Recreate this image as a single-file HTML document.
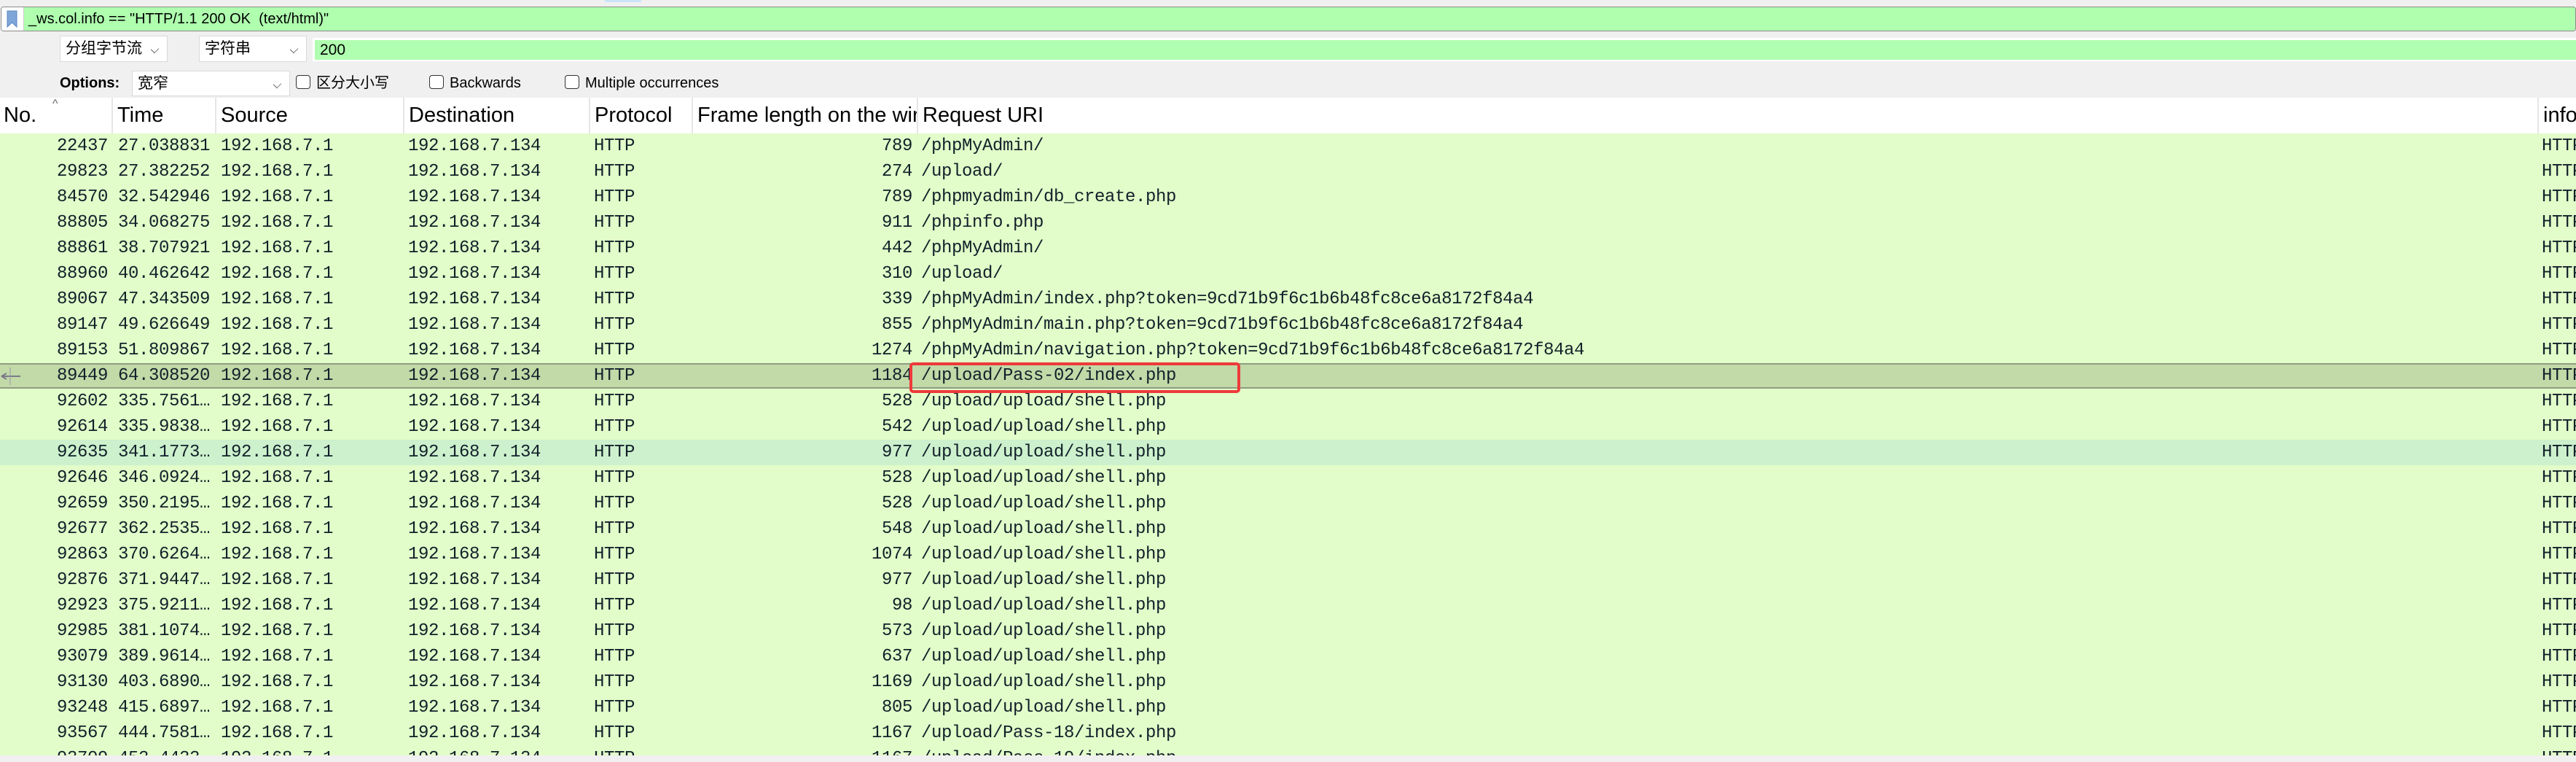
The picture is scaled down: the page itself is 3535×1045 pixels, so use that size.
<!DOCTYPE html>
<html><head><meta charset="utf-8"><style>
*{margin:0;padding:0;box-sizing:border-box}
body{width:3535px;height:1045px;overflow:hidden;background:#f0f0f0;position:relative;font-family:"Liberation Sans","Noto Sans CJK SC",sans-serif;color:#000}
.a{position:absolute}
.combo{position:absolute;background:#fff;border:1px solid #d9d9d9;font-size:21px;line-height:34px;padding-left:7px}
.chev{position:absolute;right:12px;top:13px;width:9px;height:9px;border-right:1.5px solid #666;border-bottom:1.5px solid #666;transform:rotate(45deg) scaleX(0.8)}
.cb{position:absolute;width:20px;height:19px;border:1.5px solid #333;border-radius:4px;background:#fff}
.lbl{position:absolute;font-size:20px;line-height:24px}
.hdr{position:absolute;top:134px;height:49px;background:#fff;left:0;width:3535px}
.hc{position:absolute;top:0;height:49px;font-size:29px;line-height:49px;border-left:2px solid #e6e6e6;padding-left:6px;white-space:nowrap;overflow:hidden}
.rows{position:absolute;top:183px;left:0;width:3535px;height:853px;overflow:hidden}
.r{position:absolute;left:0;width:3535px;height:35px;background:#e2fdc9;font-family:"Liberation Mono",monospace;font-size:24px;letter-spacing:-0.4px;line-height:35px;color:#12202a;white-space:nowrap}
.r span{position:absolute;top:0}
.no{right:3387px;text-align:right}
.fl{right:2283px;text-align:right}
</style></head><body>
<div class="a" style="left:830px;top:0;width:50px;height:3px;background:#cce4f7"></div>
<div class="a" style="left:1px;top:9px;width:3534px;height:34px;border:1px solid #8c8c8c;border-radius:4px;background:#afffaf;overflow:hidden">
 <div class="a" style="left:0;top:0;width:31px;height:32px;background:#fff;border-right:1px solid #ccc"></div>
 <svg class="a" style="left:7px;top:4px" width="15" height="24" viewBox="0 0 15 24"><path d="M1 1H14V23L7.5 17L1 23Z" fill="#7ea7d8" stroke="#5b86c0" stroke-width="1"/></svg>
 <div class="a" style="left:37px;top:0;font-size:20px;line-height:32px">_ws.col.info == "HTTP/1.1 200 OK&nbsp; (text/html)"</div>
</div>
<div class="combo" style="left:82px;top:49px;width:148px;height:36px">分组字节流<span class="chev"></span></div>
<div class="combo" style="left:273px;top:49px;width:148px;height:36px">字符串<span class="chev"></span></div>
<div class="a" style="left:429px;top:52px;width:3106px;height:32px;background:#fff"></div>
<div class="a" style="left:432px;top:55px;width:3103px;height:27px;background:#b0ffb0;font-size:21px;line-height:27px;padding-left:7px">200</div>
<div class="lbl" style="left:82px;top:102px;font-weight:bold;font-size:20px">Options:</div>
<div class="combo" style="left:181px;top:97px;width:217px;height:35px">宽窄<span class="chev"></span></div>
<div class="cb" style="left:406px;top:103px"></div><div class="lbl" style="left:434px;top:102px;font-size:20px">区分大小写</div>
<div class="cb" style="left:589px;top:103px"></div><div class="lbl" style="left:617px;top:102px">Backwards</div>
<div class="cb" style="left:775px;top:103px"></div><div class="lbl" style="left:803px;top:102px">Multiple occurrences</div>
<div class="hdr">
 <div class="hc" style="left:-2px;width:155px;padding-left:5px">No.<span class="a" style="left:72px;top:-16px;font-size:16px;color:#666">^</span></div>
 <div class="hc" style="left:153px;width:142px">Time</div>
 <div class="hc" style="left:295px;width:258px">Source</div>
 <div class="hc" style="left:553px;width:255px">Destination</div>
 <div class="hc" style="left:808px;width:141px">Protocol</div>
 <div class="hc" style="left:949px;width:309px">Frame length on the wire</div>
 <div class="hc" style="left:1258px;width:2224px">Request URI</div>
 <div class="hc" style="left:3482px;width:60px">info</div>
</div>
<div class="rows" id="rows"></div>
<div class="a" style="left:0;top:1036px;width:3535px;height:9px;background:#f0f0f0"></div>
<script>
var d=[["22437","27.038831","789","/phpMyAdmin/"],["29823","27.382252","274","/upload/"],["84570","32.542946","789","/phpmyadmin/db_create.php"],["88805","34.068275","911","/phpinfo.php"],["88861","38.707921","442","/phpMyAdmin/"],["88960","40.462642","310","/upload/"],["89067","47.343509","339","/phpMyAdmin/index.php?token=9cd71b9f6c1b6b48fc8ce6a8172f84a4"],["89147","49.626649","855","/phpMyAdmin/main.php?token=9cd71b9f6c1b6b48fc8ce6a8172f84a4"],["89153","51.809867","1274","/phpMyAdmin/navigation.php?token=9cd71b9f6c1b6b48fc8ce6a8172f84a4"],["89449","64.308520","1184","/upload/Pass-02/index.php"],["92602","335.7561…","528","/upload/upload/shell.php"],["92614","335.9838…","542","/upload/upload/shell.php"],["92635","341.1773…","977","/upload/upload/shell.php"],["92646","346.0924…","528","/upload/upload/shell.php"],["92659","350.2195…","528","/upload/upload/shell.php"],["92677","362.2535…","548","/upload/upload/shell.php"],["92863","370.6264…","1074","/upload/upload/shell.php"],["92876","371.9447…","977","/upload/upload/shell.php"],["92923","375.9211…","98","/upload/upload/shell.php"],["92985","381.1074…","573","/upload/upload/shell.php"],["93079","389.9614…","637","/upload/upload/shell.php"],["93130","403.6890…","1169","/upload/upload/shell.php"],["93248","415.6897…","805","/upload/upload/shell.php"],["93567","444.7581…","1167","/upload/Pass-18/index.php"],["93709","453.4433…","1167","/upload/Pass-19/index.php"]];
var h="";
d.forEach(function(x,i){
 var bg=i==9?"background:#c2d9a8;border-top:2px solid #8e9c82;border-bottom:2px solid #8e9c82;line-height:31px;":(i==12?"background:#cdf1cd;":"");
 h+='<div class="r" style="top:'+(i*35)+'px;'+bg+'">'+
 (i==9?'<span style="left:0;top:0;width:30px;height:31px"><svg width="30" height="31"><path d="M2 16H28M2 16L9 12M2 16L9 20" stroke="#7a7a8a" stroke-width="2" fill="none"/><path d="M14 4V28" stroke="#9a9aa8" stroke-width="1"/></svg></span>':'')+
 '<span class="no">'+x[0]+'</span><span style="left:162px">'+x[1]+'</span><span style="left:303px">192.168.7.1</span><span style="left:560px">192.168.7.134</span><span style="left:815px">HTTP</span><span class="fl">'+x[2]+'</span><span style="left:1264px">'+x[3]+'</span><span style="left:3488px">HTTP/1.1 200 OK</span></div>';
});
h+='<div class="a" style="left:1248px;top:314px;width:454px;height:42px;border:4px solid #ee3a3a;border-radius:5px"></div>';
document.getElementById("rows").innerHTML=h;
</script>
</body></html>
